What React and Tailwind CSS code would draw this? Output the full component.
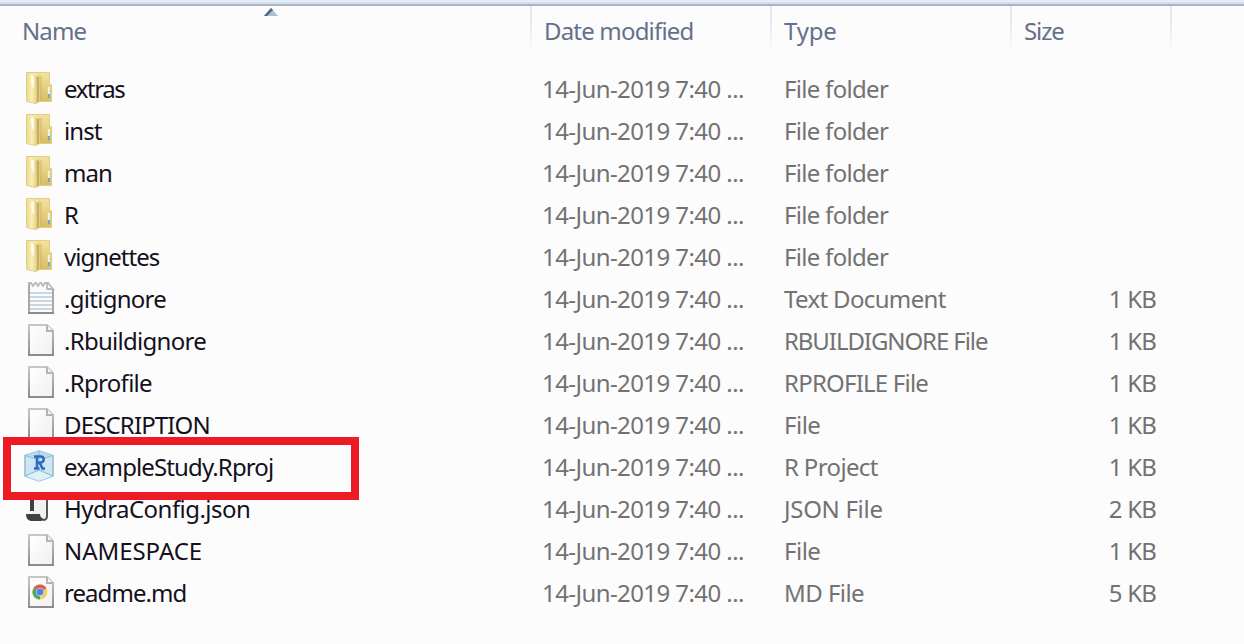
import React from "react";

const DATE = "14-Jun-2019 7:40 ...";

const FILES = [
  { icon: "folder", name: "extras", type: "File folder", track: "tracking-[-1.4px]", typeTrack: "tracking-[-0.7px]" },
  { icon: "folder", name: "inst", type: "File folder", track: "tracking-[-0.9px]", typeTrack: "tracking-[-0.7px]" },
  { icon: "folder", name: "man", type: "File folder", track: "tracking-[-1px]", typeTrack: "tracking-[-0.7px]" },
  { icon: "folder", name: "R", type: "File folder", track: "tracking-[-0.4px]", typeTrack: "tracking-[-0.7px]" },
  { icon: "folder", name: "vignettes", type: "File folder", track: "tracking-[-0.95px]", typeTrack: "tracking-[-0.7px]" },
  { icon: "text", name: ".gitignore", type: "Text Document", size: "1 KB", track: "tracking-[-0.72px]", typeTrack: "tracking-[-0.65px]" },
  { icon: "blank", name: ".Rbuildignore", type: "RBUILDIGNORE File", size: "1 KB", track: "tracking-[-0.72px]", typeTrack: "tracking-[-1.08px]" },
  { icon: "blank", name: ".Rprofile", type: "RPROFILE File", size: "1 KB", track: "tracking-[-0.7px]", typeTrack: "tracking-[-0.78px]" },
  { icon: "blank", name: "DESCRIPTION", type: "File", size: "1 KB", track: "tracking-[-0.85px]", typeTrack: "tracking-[-0.5px]" },
  { icon: "rproj", name: "exampleStudy.Rproj", type: "R Project", size: "1 KB", track: "tracking-[-0.88px]", typeTrack: "tracking-[-0.65px]" },
  { icon: "json", name: "HydraConfig.json", type: "JSON File", size: "2 KB", track: "tracking-[-0.54px]", typeTrack: "tracking-[-0.3px]" },
  { icon: "blank", name: "NAMESPACE", type: "File", size: "1 KB", track: "tracking-[-0.05px]", typeTrack: "tracking-[-0.5px]" },
  { icon: "chrome", name: "readme.md", type: "MD File", size: "5 KB", track: "tracking-[-0.95px]", typeTrack: "tracking-[-0.55px]" },
];

function Gradients() {
  return (
    <svg className="absolute size-0" aria-hidden="true">
      <defs>
        <linearGradient id="folderBack" x1="0" y1="0" x2="0" y2="1">
          <stop offset="0" stopColor="#f3e3a0" />
          <stop offset="1" stopColor="#d9bc60" />
        </linearGradient>
        <linearGradient id="folderFlap" x1="0" y1="0" x2="1" y2="0">
          <stop offset="0" stopColor="#ecd98c" />
          <stop offset="0.4" stopColor="#f8f0b8" />
          <stop offset="0.7" stopColor="#ead98f" />
          <stop offset="1" stopColor="#c3a656" />
        </linearGradient>
        <linearGradient id="pageEdge" x1="0" y1="0" x2="0" y2="1">
          <stop offset="0" stopColor="#c6c6c6" />
          <stop offset="1" stopColor="#8e8e8e" />
        </linearGradient>
        <linearGradient id="pageFill" x1="0" y1="0" x2="1" y2="1">
          <stop offset="0" stopColor="#ffffff" />
          <stop offset="1" stopColor="#f0f0f0" />
        </linearGradient>
      </defs>
    </svg>
  );
}

function Folder() {
  return (
    <>
      <path d="M11 0.5H25.5V12.5H27.5V29.5H11Z" fill="url(#folderBack)" stroke="#e3cd80" strokeWidth="1" />
      <path d="M2.5 0.5H11L15.5 3V29.500L12 31.5L2.5 29.5Z" fill="url(#folderFlap)" stroke="#e2cd84" strokeWidth="1" />
      <path d="M5 2H12L15 4" fill="none" stroke="#f4e7ac" strokeWidth="2" />
      <path d="M7.500 4L9.500 4V16L7.500 10Z" fill="#fffef0" stroke="#fffdf0" strokeWidth="0.8" />
      <path d="M13.800 5V30" stroke="#bda458" strokeWidth="2" opacity=".6" />
      <path d="M17 4V28" stroke="#cdb364" strokeWidth="2" opacity=".45" />
      <path d="M24.800 15V25.500" stroke="#f4f4ec" strokeWidth="2" />
      <path d="M24.800 22V26" stroke="#5fa6d2" strokeWidth="2" />
    </>
  );
}

function Page({ children }) {
  return (
    <>
      <path d="M5 1H23L29 7V31H5Z" fill="url(#pageFill)" stroke="url(#pageEdge)" strokeWidth="2" />
      <path d="M23 1V7H29" fill="#f4f4f4" stroke="#b4b4b4" strokeWidth="2" />
      <path d="M4 31H30" stroke="#8c8c8c" strokeWidth="2" />
      {children}
    </>
  );
}

function TextPage() {
  return (
    <>
      <path d="M5 2V31H29V8L23 2Z" fill="#fbfbfb" />
      <path d="M4 1H7L9 4L11 1H12L14 4L16 1H17L19 4L21 1H24L29 7H23V2" fill="none" stroke="#b9b9b9" strokeWidth="1.8" />
      <path d="M6 11H28M6 15H28M6 19H28M6 23H28M6 27H28" stroke="#c9d7e4" strokeWidth="2" />
      <path d="M5 2V31M29 7V31" stroke="#a8a8a8" strokeWidth="2" />
      <path d="M4 31H30" stroke="#8c8c8c" strokeWidth="2" />
    </>
  );
}

function RProject() {
  return (
    <>
      <path d="M15 1L29 5.500V26L15 31L1 26V5.500Z" fill="#cfe5f3" stroke="#8fc0d6" strokeWidth="1.6" />
      <path d="M15 1L29 5.500L15 10L1 5.500Z" fill="#b7dced" />
      <path d="M1.500 26L15 20.500L28.500 26L15 31Z" fill="#def0f8" />
      <path d="M1 26L15 20L29 26M15 1V10M1 5.500L12 9M29 5.500L20 8.500" fill="none" stroke="#8fc3da" strokeWidth="1.3" />
      <path d="M10 6.500H16.500C20.800 6.500 20.800 12.500 16.500 12.500H13M13 6.500V18.500M10 18.500H15.500M15.500 12.500L18.500 18.500H21" fill="none" stroke="#2f6cc0" strokeWidth="2.600" />
    </>
  );
}

function Script() {
  return (
    <>
      <path d="M8 0H24V26H8Z" fill="#f1f1f1" />
      <path d="M8 0V19" stroke="#404040" strokeWidth="4" />
      <path d="M23 0V24Q23 28 19 28" fill="none" stroke="#555" strokeWidth="2" />
      <path d="M2 22H16Q16 26 20 27Q19 29 17 29H7Q2 28 2 22Z" fill="#404040" />
    </>
  );
}

function Chrome() {
  return (
    <Page>
      <circle cx="16" cy="16" r="7.500" fill="#f6cf62" />
      <path d="M16 16L9.500 12.200A7.500 7.500 0 0 1 22.500 12.200Z" fill="#d9604f" />
      <path d="M16 16L9.500 12.200A7.500 7.500 0 0 0 16 23.500Z" fill="#4fa768" />
      <circle cx="16" cy="16" r="3.900" fill="#c3d6f3" />
      <circle cx="16" cy="16" r="3.300" fill="#4a86e0" />
    </Page>
  );
}

const ICONS = { folder: Folder, blank: Page, text: TextPage, rproj: RProject, json: Script, chrome: Chrome };

function FileIcon({ kind }) {
  const Drawing = ICONS[kind];
  return (
    <svg className="mt-[3px] size-8 shrink-0" viewBox="0 0 32 32">
      <Drawing />
    </svg>
  );
}

function Header({ label, className }) {
  return (
    <div className={`flex h-11 ${className}`}>
      <span className="pt-[5px] leading-10">{label}</span>
      <div className="ml-auto h-11 w-0.5 bg-linear-to-b from-[#e2e8f3] via-[#e6ebf5] to-[#fcfcfc]" />
    </div>
  );
}

export default function App() {
  return (
    <div className="relative h-[644px] w-[1244px] overflow-hidden bg-[#fcfcfc] font-['Noto_Sans',sans-serif] text-[24px] whitespace-nowrap">
      <Gradients />
      <div className="h-0.5 bg-[#e5edf6]" />
      <div className="h-0.5 bg-[#d6e0ec]" />
      <div className="h-0.5 bg-[#a9b4c9]" />
      <div className="grid h-[63px] grid-cols-[532px_240px_240px_160px] text-[#65708a]">
        <Header label="Name" className="pl-[22px] tracking-[-0.9px]" />
        <Header label="Date modified" className="pl-3 tracking-[-0.82px]" />
        <Header label="Type" className="pl-3 tracking-[-0.2px]" />
        <Header label="Size" className="pl-3 tracking-[-1.1px]" />
      </div>
      <svg className="absolute top-2 left-[263px] h-2 w-4" viewBox="0 0 16 8">
        <path d="M8 0L15 8H1Z" fill="#a9c2d6" />
        <path d="M8 0L1 8H4L10 2Z" fill="#4a6884" />
      </svg>

      <main>
        {FILES.map((file) => (
          <div key={file.name} className="grid h-[42px] grid-cols-[542px_242px_240px_132px] leading-10 text-[#727272]">
            <div className="flex gap-2 pl-6 text-[#14101c]">
              <FileIcon kind={file.icon} />
              <span className={file.track}>{file.name}</span>
            </div>
            <span className="tracking-[-0.58px]">{DATE}</span>
            <span className={file.typeTrack}>{file.type}</span>
            <span className="text-right tracking-[-0.8px]">{file.size}</span>
          </div>
        ))}
      </main>

      <div className="absolute top-[437px] left-[3px] h-[63px] w-[356px] border-8 border-[#ed1c24]" />
    </div>
  );
}
